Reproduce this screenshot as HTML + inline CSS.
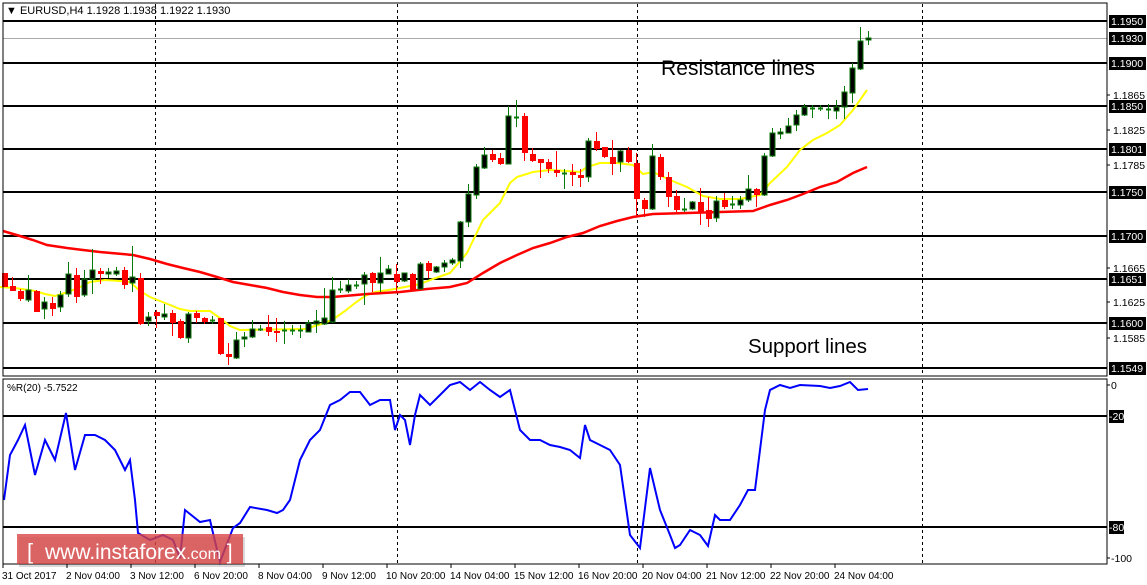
<!DOCTYPE html>
<html><head><meta charset="utf-8"><style>
html,body{margin:0;padding:0;background:#fff;width:1147px;height:585px;overflow:hidden}
svg{display:block}
text{font-family:"Liberation Sans",sans-serif}
</style></head><body>
<svg id="s" width="1147" height="585" xmlns="http://www.w3.org/2000/svg">
<rect width="1147" height="585" fill="#fff"/>
<g id="grid"></g>
<g id="ma"></g>
<g id="cd"></g>
<g id="ind"></g>
<rect x="3" y="3" width="1104" height="373" fill="none" stroke="#000" stroke-width="1"/>
<rect x="3" y="379" width="1104" height="185" fill="none" stroke="#000" stroke-width="1"/>
<text x="6" y="14" font-size="11" fill="#000">▼ EURUSD,H4  1.1928 1.1938 1.1922 1.1930</text>
<text x="7" y="391" font-size="10" fill="#000">%R(20) -5.7522</text>
<text x="661" y="75" font-size="21" fill="#000" textLength="154">Resistance lines</text>
<text x="748" y="353" font-size="20.5" fill="#000" textLength="119">Support lines</text>
<g id="axis" font-size="10.5"></g>
<g>
<rect x="19" y="537" width="226" height="30" fill="#000" opacity="0.15"/>
<rect x="17" y="534" width="226" height="30" fill="#d94545" opacity="0.8"/>
<text x="27" y="559" font-size="22" fill="#fff">[ </text>
<text x="45" y="559" font-size="21" fill="#fff">www.instaforex<tspan font-size="16">.com</tspan> ]</text>
</g>
</svg>
<script>
var NS="http://www.w3.org/2000/svg";
function el(p,t,a,txt){var e=document.createElementNS(NS,t);for(var k in a)e.setAttribute(k,a[k]);if(txt!=null)e.textContent=txt;document.getElementById(p).appendChild(e);return e;}
[155,397,637,922].forEach(function(x){el('grid','line',{x1:x+.5,y1:4,x2:x+.5,y2:376,stroke:'#000','stroke-dasharray':'3,3'});el('grid','line',{x1:x+.5,y1:380,x2:x+.5,y2:564,stroke:'#000','stroke-dasharray':'3,3'});});
[21,63,106,149,192,236,279,323,368].forEach(function(y){el('grid','line',{x1:3,y1:y,x2:1107,y2:y,stroke:'#000','stroke-width':2});});
el('grid','line',{x1:3,y1:38.5,x2:1107,y2:38.5,stroke:'#aaa','stroke-width':1});
[416,527].forEach(function(y){el('grid','line',{x1:3,y1:y,x2:1107,y2:y,stroke:'#000','stroke-width':2});});
var yl=[[0,287],[15,288],[35,291],[45,294],[55,296],[68,292],[80,287],[90,282],[105,280],[120,281],[130,282],[140,291],[150,297],[160,301],[170,305],[180,309],[190,311],[210,311],[220,318],[230,326],[240,330],[305,329],[315,326],[325,323],[335,318],[345,311],[355,303],[365,296],[375,292],[395,289],[420,284],[433,279],[450,273],[467,253],[483,220],[500,203],[510,183],[517,177],[533,172],[550,170],[567,171],[580,172],[587,167],[600,163],[617,163],[633,165],[643,174],[653,172],[670,180],[687,187],[703,196],[720,199],[740,199],[760,195],[770,183],[787,167],[800,150],[813,140],[827,133],[840,125],[853,110],[867,90]];
var rd=[[3,231],[20,236],[33,240],[47,245],[67,248],[83,250],[100,252],[133,255],[150,259],[167,264],[183,268],[200,272],[217,277],[233,282],[250,285],[267,288],[283,292],[300,295],[317,297],[333,297],[367,294],[400,292],[427,289],[450,287],[467,283],[483,273],[500,263],[517,255],[533,248],[550,243],[567,237],[583,233],[600,226],[617,221],[633,217],[653,214],[687,213],[720,212],[753,211],[770,205],[787,200],[803,194],[820,187],[837,182],[853,173],[867,167]];
function pts(a){return a.map(function(p){return p.join(',')}).join(' ');}
el('ma','polyline',{points:pts(yl),fill:'none',stroke:'#ffff00','stroke-width':2});
el('ma','polyline',{points:pts(rd),fill:'none',stroke:'#ff0000','stroke-width':2.5});
var C=[[273,287,273,287],[286,291,277,291],[291,299,289,301],[300,290,275,302],[291,312,290,312],[309,302,297,319],[303,309,297,316],[307,295,291,312],[294,274,262,297],[275,297,268,303],[295,279,270,297],[279,270,249,294],[271,274,268,284],[274,272,268,278],[274,271,267,276],[270,285,267,289],[283,277,246,292],[278,324,273,325],[321,317,312,326],[312,316,310,328],[317,314,304,320],[313,323,310,336],[321,338,319,339],[338,314,312,343],[313,318,311,323],[318,322,317,324],[321,320,316,324],[318,354,318,355],[354,357,343,365],[358,340,332,359],[339,337,332,347],[337,329,320,338],[330,329,325,331],[327,332,315,336],[331,333,318,342],[331,330,321,344],[331,330,325,335],[331,330,325,338],[332,323,320,332],[324,321,310,333],[324,318,288,325],[322,290,277,323],[290,289,281,293],[291,285,279,293],[286,285,281,289],[284,275,272,305],[273,283,272,292],[283,273,257,292],[274,269,265,274],[274,282,264,292],[281,273,273,282],[274,290,273,291],[289,264,262,289],[263,271,261,278],[272,267,266,273],[267,263,260,272],[263,260,258,265],[261,222,221,268],[222,194,184,227],[195,167,164,199],[168,155,147,169],[154,160,150,162],[158,164,153,165],[164,116,106,164],[118,117,100,127],[116,153,113,161],[154,161,148,162],[159,163,159,178],[162,169,159,173],[170,173,151,177],[173,173,169,189],[172,175,164,186],[175,178,169,187],[177,141,138,182],[141,149,132,151],[147,157,147,158],[157,164,140,175],[162,151,150,172],[150,162,147,163],[163,199,153,217],[200,209,198,217],[209,156,144,210],[157,177,154,180],[177,197,172,207],[196,210,190,212],[209,209,198,212],[209,202,201,210],[202,213,188,225],[210,219,197,227],[218,201,196,222],[200,207,193,209],[204,204,196,209],[205,200,196,209],[200,189,175,202],[189,195,188,207],[195,156,153,196],[156,133,128,157],[134,132,128,139],[133,126,118,133],[125,115,110,131],[115,107,104,116],[108,108,105,118],[108,108,105,111],[109,109,104,119],[111,107,100,119],[107,92,86,119],[93,68,63,103],[69,41,27,70],[40,38,31,45]];
C.forEach(function(c,i){var x=4+8*i,o=c[0],cl=c[1],h=c[2],l=c[3];var bull=cl<=o;
 var top=Math.min(o,cl),bot=Math.max(o,cl);
 if(bull){el('cd','line',{x1:x+.5,y1:h,x2:x+.5,y2:l,stroke:'#0a7a0a','stroke-width':1});
  if(bot-top<2){el('cd','line',{x1:x-2,y1:top+.5,x2:x+3,y2:top+.5,stroke:'#0a7a0a','stroke-width':2});}
  else el('cd','rect',{x:x-2,y:top,width:5,height:bot-top,fill:'#000',stroke:'#0a7a0a','stroke-width':1});}
 else{el('cd','line',{x1:x+.5,y1:h,x2:x+.5,y2:l,stroke:'#f00','stroke-width':1});
  el('cd','rect',{x:x-2,y:top,width:6,height:Math.max(bot-top,2),fill:'#f00'});}
});
var R=[[4,500],[10,455],[18,440],[25,425],[35,475],[45,440],[55,460],[66,413],[75,470],[85,435],[95,435],[105,440],[115,450],[125,470],[130,460],[135,500],[138,533],[150,540],[163,535],[173,540],[180,558],[185,510],[200,522],[210,520],[213,533],[220,562],[233,528],[240,523],[250,507],[267,510],[277,513],[283,510],[290,500],[300,460],[310,440],[320,430],[330,405],[340,400],[350,392],[360,392],[370,405],[380,400],[390,400],[395,430],[400,415],[405,420],[410,445],[415,415],[420,395],[430,405],[440,395],[450,385],[460,382],[470,390],[480,382],[490,390],[500,397],[510,390],[520,430],[530,440],[540,440],[550,445],[560,447],[570,450],[580,458],[585,425],[590,440],[600,445],[610,450],[620,465],[630,535],[640,548],[650,468],[660,510],[670,535],[675,548],[680,545],[690,530],[700,535],[708,546],[715,515],[720,520],[730,520],[740,505],[748,490],[755,490],[765,410],[770,390],[780,385],[790,388],[800,385],[820,386],[830,388],[840,386],[850,382],[858,390],[868,389]];
el('ind','polyline',{points:pts(R),fill:'none',stroke:'#0000ff','stroke-width':2});
[['1.1865',95],['1.1825',130],['1.1785',165],['1.1665',268],['1.1625',302],['1.1585',338],['0',385],['-100',558]].forEach(function(a){
 el('axis','line',{x1:1107,y1:a[1],x2:1110,y2:a[1],stroke:'#000'});
 el('axis','text',{x:a[0]=='0'||a[0]=='-100'?1111:1113,y:a[1]+4,fill:'#000'},a[0]);});
[['1.1950',21],['1.1930',38],['1.1900',63],['1.1850',106],['1.1801',149],['1.1750',192],['1.1700',236],['1.1651',279],['1.1600',323],['1.1549',368]].forEach(function(a){
 el('axis','rect',{x:1109,y:a[1]-6,width:37,height:13,fill:'#000'});
 el('axis','text',{x:1111,y:a[1]+4,fill:'#fff'},a[0]);});
[['-20',416],['-80',527]].forEach(function(a){
 el('axis','rect',{x:1109,y:a[1]-6,width:15,height:13,fill:'#000'});
 el('axis','text',{x:1109,y:a[1]+4,fill:'#fff'},a[0]);});
var T=['31 Oct 2017','2 Nov 04:00','3 Nov 12:00','6 Nov 20:00','8 Nov 04:00','9 Nov 12:00','10 Nov 20:00','14 Nov 04:00','15 Nov 12:00','16 Nov 20:00','20 Nov 04:00','21 Nov 12:00','22 Nov 20:00','24 Nov 04:00'];
T.forEach(function(t,i){var x=3+64*i;el('axis','line',{x1:x,y1:564,x2:x,y2:568,stroke:'#000'});el('axis','text',{x:x-1,y:579,fill:'#000','font-size':'10'},t);});
</script>
</body></html>
